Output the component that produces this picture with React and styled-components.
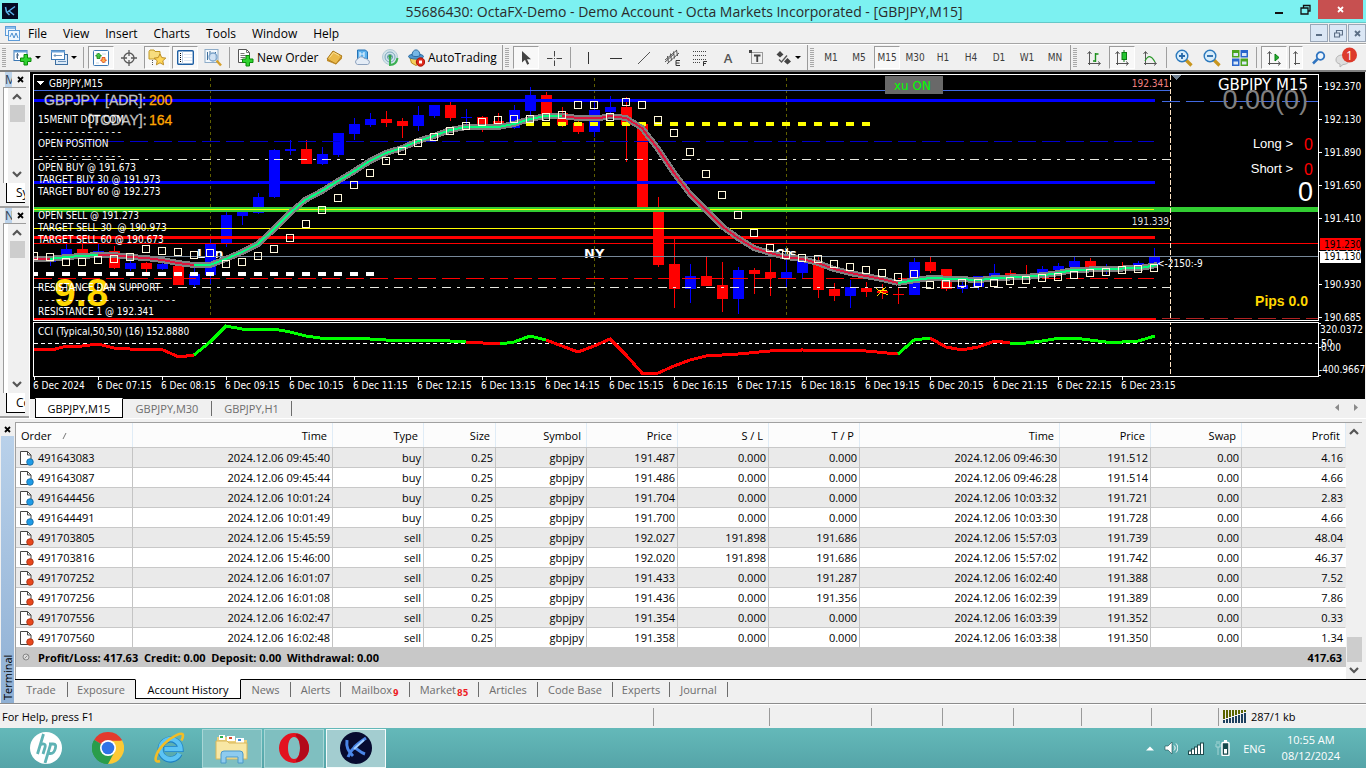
import React from "react";
import styled, { createGlobalStyle, css } from "styled-components";

const ui = `"Open Sans", "Noto Sans", sans-serif`;
const tahoma = `"DejaVu Sans Condensed", "DejaVu Sans", sans-serif`;

const GlobalStyle = createGlobalStyle`
  * { box-sizing: border-box; }
  body { margin: 0; background: #f0f0f0; font-family: ${ui}; font-size: 11px; color: #000; }
  button { font: inherit; color: inherit; background: none; border: 0; padding: 0; margin: 0; }
  svg { display: block; flex: none; }
`;

const App_ = styled.div`
  min-height: 100vh;
  display: flex;
  flex-direction: column;
  overflow: hidden;
`;

/* ---------- title and menu ---------- */
const TitleBar = styled.header`
  height: 23px;
  display: flex;
  background: #7cf1f1;
  border-bottom: 1px solid #66c8c8;
  padding-left: 2px;
`;
const TitleSide = styled.div`
  width: 106px;
  display: flex;
  align-items: ${(p) => (p.$end ? "flex-start" : "center")};
  justify-content: ${(p) => (p.$end ? "flex-end" : "flex-start")};
`;
const TitleText = styled.h1`
  flex: 1;
  margin: 0;
  font-size: 14px;
  line-height: 23px;
  font-weight: 400;
  text-align: center;
  color: #2b2b2b;
  white-space: nowrap;
`;
const CaptionButton = styled.button`
  width: ${(p) => (p.$close ? 45 : 26)}px;
  height: 19px;
  display: flex;
  align-items: center;
  justify-content: center;
  background: ${(p) => (p.$close ? "#c75050" : "transparent")};
  margin-right: ${(p) => (p.$close ? 3 : 0)}px;
`;
const MenuBar = styled.nav`
  height: 21px;
  display: flex;
  align-items: center;
  padding-left: 5px;
  border-bottom: 1px solid #a5a5a5;
`;
const MenuItem = styled.button`
  height: 20px;
  font-size: 12px;
  padding: 0 8px;
`;
const MdiButtons = styled.div`
  margin-left: auto;
  display: flex;
  gap: 1px;
`;
const MdiButton = styled.button`
  width: 18px;
  height: 18px;
  display: flex;
  align-items: center;
  justify-content: center;
  border: 1px solid #9aa6b6;
  background: #dbe7f5;
`;

/* ---------- toolbar ---------- */
const Toolbar = styled.div`
  height: 28px;
  display: flex;
  align-items: center;
  border-top: 1px solid #fff;
  border-bottom: 2px solid #808080;
`;
const Group = styled.div`
  height: 25px;
  display: flex;
  align-items: center;
  gap: 2px;
  padding: 0 ${(p) => (p.$open ? 10 : 2)}px 0 2px;
  border-right: ${(p) => (p.$open ? "0" : "1px solid #9a9a9a")};
  flex: ${(p) => (p.$open ? "1" : "none")};
`;
const Grip = styled.span`
  width: 4px;
  height: 19px;
  margin-right: 2px;
  background: repeating-linear-gradient(#a8a8a8 0 1px, #f0f0f0 1px 2px);
`;
const Sep = styled.span`
  width: 1px;
  height: 21px;
  background: #a0a0a0;
  margin: 0 2px 0 1px;
`;
const ToolButton = styled.button`
  height: 23px;
  width: ${(p) => p.$w || 26}px;
  display: flex;
  align-items: center;
  justify-content: ${(p) => (p.$label ? "flex-start" : "center")};
  gap: 3px;
  padding-left: ${(p) => (p.$label ? 3 : 0)}px;
  font-size: ${(p) => (p.$label ? 12 : 10)}px;
  white-space: nowrap;
  ${(p) =>
    p.$on &&
    css`
      border: 1px solid #9c9c9c;
      border-right-color: #fff;
      border-bottom-color: #fff;
      background: #f8f8f8;
    `}
`;
const Frame = styled(ToolButton)`
  font-family: ${tahoma};
  color: #3c3c3c;
`;
const Push = styled.span`
  margin-left: auto;
`;

/* ---------- workspace ---------- */
const Workspace = styled.main`
  display: flex;
  padding-right: 1px;
`;
const Dock = styled.aside`
  width: 30px;
  display: flex;
  flex-direction: column;
  border-right: 1px solid #fff;
`;
const DockPanel = styled.section`
  height: ${(p) => p.$h}px;
  display: flex;
  flex-direction: column;
  border-bottom: 2px solid #a0a0a0;
`;
const DockHead = styled.div`
  display: flex;
  height: 15px;
  padding: 0 5px;
  justify-content: space-between;
  align-items: center;
  color: #2d3e52;
`;
const DockLabel = styled.span`
  width: 7px;
  overflow: hidden;
  font-size: 12px;
  line-height: 15px;
  background: #bcd3ea;
`;
const DockBody = styled.div`
  flex: 1;
  margin-left: 3px;
  border-left: 1px solid #9c9c9c;
  border-top: 1px solid #9c9c9c;
  background: #fff;
  padding-left: 4px;
  margin-right: 3px;
`;
const Scroll = styled.div`
  height: 100%;
  display: flex;
  flex-direction: column;
  align-items: center;
  background: #f0f0f0;
`;
const ScrollButton = styled.button`
  width: 16px;
  height: 17px;
  display: flex;
  align-items: center;
  justify-content: center;
`;
const Thumb = styled.span`
  width: 15px;
  height: ${(p) => p.$h}px;
  background: #cdcdcd;
`;
const Space = styled.span`
  flex: 1;
`;
const DockTab = styled.button`
  height: 20px;
  margin: 0 4px 3px 6px;
  padding-left: 9px;
  overflow: hidden;
  white-space: nowrap;
  text-align: left;
  font-size: 12px;
  line-height: 18px;
  background: #fff;
  border: 1px solid #000;
  border-top: 0;
  border-right: 0;
`;
const ChartWindow = styled.section`
  flex: 1;
  min-width: 0;
`;
const Chart = styled.svg`
  width: 100%;
  height: 326px;
  background: #000;
  font-family: ${tahoma};
  font-size: 10px;
  fill: #fff;
  shape-rendering: crispEdges;
`;
const TabStrip = styled.div`
  display: flex;
  height: ${(p) => p.$h}px;
  border-top: 1px solid #000;
  padding-left: ${(p) => p.$pad || 0}px;
`;
const Tab = styled.button`
  height: ${(p) => (p.$on ? 20 : 15)}px;
  margin-top: ${(p) => (p.$on ? -1 : 2)}px;
  width: ${(p) => p.$w}px;
  display: flex;
  align-items: center;
  justify-content: center;
  white-space: nowrap;
  color: #6d6d6d;
  border-right: 1px solid ${(p) => (p.$plain ? "transparent" : "#6d6d6d")};
  ${(p) =>
    p.$on &&
    css`
      color: #000;
      background: #fff;
      border: 1px solid #000;
      border-top-color: #fff;
    `}
`;
const Unread = styled.sub`
  color: #ed1c24;
  font-family: ${tahoma};
  font-weight: 700;
  font-size: 9px;
  line-height: 9px;
  margin: 8px 0 0 1px;
`;
const TabArrows = styled.div`
  margin-left: auto;
  display: flex;
  gap: 13px;
  padding: 5px 7px 0 0;
`;

/* ---------- terminal ---------- */
const Terminal = styled.section`
  display: flex;
  border-top: 1px solid #fff;
  padding-top: 3px;
  border-bottom: 1px solid #8c8c8c;
`;
const TerminalSide = styled.div`
  width: 15px;
  display: flex;
  flex-direction: column;
  align-items: center;
`;
const TerminalClose = styled.button`
  height: 14px;
  display: flex;
  align-items: center;
`;
const TerminalName = styled.h2`
  flex: 1;
  margin: 0;
  width: 13px;
  font-size: 11px;
  line-height: 13px;
  font-weight: 400;
  writing-mode: vertical-rl;
  transform: rotate(180deg);
  background: linear-gradient(#8fb0d4, #b9d1ea);
  padding-top: 3px;
`;
const TerminalMain = styled.div`
  flex: 1;
  min-width: 0;
`;
const TableArea = styled.div`
  display: flex;
  align-items: stretch;
  height: 257px;
  background: #fff;
  border-left: 1px solid #a0a0a0;
  border-top: 1px solid #a0a0a0;
  margin-right: 4px;
`;
const TableBox = styled.div`
  flex: 1;
  min-width: 0;
`;
const Table = styled.table`
  width: 100%;
  border-collapse: separate;
  border-spacing: 0;
  table-layout: fixed;
`;
const Th = styled.th`
  height: 24px;
  padding: 0 5px;
  font-weight: 400;
  text-align: ${(p) => (p.$left ? "left" : "right")};
  border-right: 1px solid #e0ecf6;
  background: #fcfcfc;
`;
const Td = styled.td`
  height: 20px;
  padding: 0 2px 0 3px;
  line-height: 17px;
  text-align: right;
  white-space: nowrap;
  border-top: 1px solid #c8c8c8;
  border-right: 1px solid ${(p) => (p.$last ? "transparent" : "#c4c4c4")};
`;
const Tr = styled.tr`
  background: ${(p) => (p.$odd ? "#eaeaea" : "#fff")};
`;
const OrderCell = styled.div`
  display: flex;
  align-items: center;
  gap: 4px;
`;
const TotalTd = styled.td`
  height: 20px;
  padding: 0 4px 0 6px;
  background: #c8c8c8;
  font-weight: 700;
  text-align: ${(p) => (p.$right ? "right" : "left")};
`;
const TotalText = styled.div`
  display: flex;
  align-items: center;
  gap: 8px;
`;
const TableScroll = styled.div`
  width: 16px;
  flex: none;
`;

/* ---------- status bar and taskbar ---------- */
const StatusBar = styled.footer`
  height: 24px;
  display: flex;
  align-items: center;
  border-top: 1px solid #fff;
`;
const StatusCell = styled.div`
  width: ${(p) => p.$w}px;
  flex: ${(p) => (p.$w ? "none" : "1")};
  height: 18px;
  display: flex;
  align-items: center;
  gap: 4px;
  padding-left: ${(p) => (p.$w ? 4 : 2)}px;
  border-left: ${(p) => (p.$w ? "1px solid #9a9a9a" : "0")};
`;
const Taskbar = styled.nav`
  flex: 1;
  min-height: 40px;
  display: flex;
  align-items: center;
  gap: 2px;
  padding-left: 16px;
  background: linear-gradient(#64b9b9, #55a4a8);
  color: #fff;
`;
const TaskButton = styled.button`
  width: 60px;
  height: 39px;
  display: flex;
  align-items: center;
  justify-content: center;
  ${(p) =>
    p.$state &&
    css`
      background: ${p.$state === "active" ? "#a3cdd0" : "#7fbfc0"};
      border: 1px solid ${p.$state === "active" ? "#f4fbfb" : "#a8d6d6"};
    `}
`;
const Tray = styled.div`
  margin-left: auto;
  display: flex;
  align-items: center;
  gap: 10px;
  padding-right: 26px;
`;
const Clock = styled.time`
  font-size: 11px;
  line-height: 16px;
  text-align: center;
  margin-left: 6px;
`;

/* ---------- icons ---------- */
const Svg = ({ w = 18, h = w, children, ...rest }) => (
  <svg width={w} height={h} viewBox={`0 0 ${w} ${h}`} fill="none" aria-hidden="true" {...rest}>
    {children}
  </svg>
);
const Caret = () => (
  <Svg w={6} h={4}><path d="M0 0h6L3 3z" fill="#000" /></Svg>
);
const Cross = ({ c = "#000" }) => (
  <Svg w={7} h={7}><path d="M1 1l5 5M6 1L1 6" stroke={c} strokeWidth="1.8" /></Svg>
);
const Chevron = ({ up }) => (
  <Svg w={10} h={7}>
    <path d={up ? "M1 6l4-4 4 4" : "M1 1l4 4 4-4"} stroke="#555" strokeWidth="2.2" />
  </Svg>
);
const Plus = ({ x, y }) => (
  <path transform={`translate(${x} ${y})`} d="M4 .5h3.500v3.500H11v3.500H7.500V11H4V7.500H.5V4H4z" fill="#2fd32f" stroke="#0a8a0a" />
);
const icons = {
  newChart: (
    <Svg w={19} h={18}>
      <rect x="1" y="1.500" width="13" height="10" fill="#fff" stroke="#3c78b4" />
      <path d="M1 2.500h13" stroke="#6aa2d8" strokeWidth="2" />
      <path d="M4.500 4v6M3 6h3M3 8h2" stroke="#4a6a8a" />
      <Plus x={7} y={5} />
    </Svg>
  ),
  profiles: (
    <Svg w={18} h={17}>
      <rect x="5.500" y="5.500" width="12" height="10" fill="#dbe9f7" stroke="#3c6ea0" />
      <path d="M8 12.500h8" stroke="#6d94ba" />
      <rect x="1.500" y="1.500" width="13" height="9" fill="#fff" stroke="#3c78b4" />
      <path d="M1 2.500h14" stroke="#6aa2d8" strokeWidth="2" />
      <path d="M4 6.500h8M5.500 5L4 6.500 5.500 8" stroke="#6d94ba" />
    </Svg>
  ),
  market: (
    <Svg w={16}>
      <rect x=".5" y=".5" width="15" height="15" rx="1" fill="#fff" stroke="#3c78b4" />
      <path d="M3 3.500h4M9 12.500h4M9 4h4M3 13h3" stroke="#c9d8e6" />
      <path d="M5.500 3l3 3h-1.500v2.500h-3V6H2.500z" fill="#43c443" stroke="#15820f" strokeWidth=".8" />
      <path d="M10.500 13l3-3H12V7.500H9V10H7.500z" fill="#ffb04a" stroke="#e03a10" strokeWidth=".8" />
    </Svg>
  ),
  data: (
    <Svg w={16}>
      <circle cx="8" cy="8" r="5" stroke="#5a5a5a" strokeWidth="1.300" />
      <path d="M8 0v6M8 10v6M0 8h6M10 8h6" stroke="#5a5a5a" strokeWidth="1.300" />
    </Svg>
  ),
  navigator: (
    <Svg w={18} h={17}>
      <path d="M1 2.500l1-1.500h4l1 1.500h5V10H1z" fill="#f7dd7e" stroke="#c29a26" />
      <path d="M4.500 11v5" stroke="#555" strokeDasharray="1 1" />
      <path d="M12 5l1.800 3.600 4 .5-3 2.700.8 4-3.600-2-3.600 2 .8-4-3-2.700 4-.5z" fill="#ffd75a" stroke="#b5851b" strokeWidth=".9" />
    </Svg>
  ),
  terminal: (
    <Svg w={17} h={15}>
      <rect x=".7" y=".7" width="15.600" height="13.600" rx="1" fill="#fff" stroke="#1d5fa4" strokeWidth="1.400" />
      <path d="M5.500 1v13" stroke="#b7cce2" />
      <path d="M3 3.500h1M3 5.500h1M3 7.500h1M3 9.500h1M3 11.500h1" stroke="#000" />
      <path d="M7 4.500h8M7 7.500h8M7 10.500h8" stroke="#dfe9f4" />
    </Svg>
  ),
  tester: (
    <Svg w={18}>
      <rect x="1" y=".5" width="13" height="13" fill="#f3f8fc" stroke="#8eacc8" />
      <path d="M3.500 3v8M6 2v6M11.500 3v8" stroke="#3c6e9c" />
      <circle cx="9" cy="8" r="4" fill="#c9def2" fillOpacity=".85" stroke="#7ba3c9" strokeWidth="1.300" />
      <path d="M12.500 11.500l4.500 5" stroke="#d6a02c" strokeWidth="2.500" />
    </Svg>
  ),
  order: (
    <Svg w={17} h={18}>
      <path d="M1.500.5h8l3 3v10h-11z" fill="#fff" stroke="#555" />
      <path d="M9.500.5v3h3M3.500 4.500h4M3.500 6.500h7M3.500 8.500h5M3.500 10.500h3" stroke="#777" />
      <Plus x={5} y={6} />
    </Svg>
  ),
  gold: (
    <Svg w={17} h={15}>
      <path d="M1 9L7 1l9 5-6 8z" fill="#eab94a" stroke="#a87617" />
      <path d="M1 9l9 5 6-8v2.500l-6 6L1 11z" fill="#c08a24" />
      <path d="M3.500 7.500l4-5 5.500 3" stroke="#fbe39a" />
    </Svg>
  ),
  cloud: (
    <Svg w={17}>
      <path d="M3.500 1h8l2 2v7h-10z" fill="#5db1ec" stroke="#2673b5" />
      <path d="M6 3v5M6 5h4M10 3v5" stroke="#e3f3ff" strokeWidth="1.200" />
      <path d="M3.500 15.500a2.700 2.700 0 010-5.200 4 4 0 017-.8 3 3 0 013 1.300 2.400 2.400 0 010 4.700z" fill="#e4ecf6" stroke="#8ca1bd" />
    </Svg>
  ),
  signal: (
    <Svg w={18} h={17}>
      <circle cx="9" cy="8" r="7.500" fill="#d3e4ea" stroke="#b3cad6" />
      <circle cx="9" cy="8" r="5" stroke="#7da7bd" />
      <circle cx="9" cy="8" r="2.500" stroke="#5a92b0" />
      <path d="M9 7v9c5 0 7-4 7.500-7" stroke="#3bb052" strokeWidth="2" />
      <circle cx="9" cy="7.500" r="1.700" fill="#34a04a" />
    </Svg>
  ),
  auto: (
    <Svg w={17} h={18}>
      <path d="M2 9h12l-1.500 5L8 16.500 3.500 14z" fill="#f4cf5b" stroke="#bd8d20" />
      <ellipse cx="8" cy="7.500" rx="7.500" ry="2.600" fill="#4e97cf" stroke="#2c6da3" />
      <path d="M4 6.500c0-7.500 8-7.500 8 0-2 1.500-6 1.500-8 0z" fill="#76b7e6" stroke="#2c6da3" />
      <circle cx="12.500" cy="13" r="4.200" fill="#df2a1b" stroke="#a81006" />
      <rect x="11" y="11.500" width="3" height="3" fill="#fff" />
    </Svg>
  ),
  cursor: (
    <Svg w={10} h={16}><path d="M1 1v11.500l3-2.700 2.200 5 2-1-2.200-4.600h4z" fill="#444" /></Svg>
  ),
  cross: (
    <Svg w={16}><path d="M8.500 1v5.500M8.500 10.500V16M1 8.500h5.500M10.500 8.500H16M8 8.500h1" stroke="#444" /></Svg>
  ),
  vline: <Svg w={14}><path d="M7.500 1v12" stroke="#333" strokeWidth="1" /></Svg>,
  hline: <Svg w={14}><path d="M1 7.500h12" stroke="#333" /></Svg>,
  trend: <Svg w={14}><path d="M1 13L13 1" stroke="#555" /></Svg>,
  channel: (
    <Svg w={17}>
      <path d="M1 11L13 1M3 15L15 4M3.500 7l1 7M6.500 4.500l1 7M9.500 2.500l1 7M12.500 1l1 6M1 13l9-8" stroke="#555" />
      <path d="M16 11.500h-4v5h4M12 14h3.500" stroke="#333" />
    </Svg>
  ),
  fibo: (
    <Svg w={16}>
      <path d="M1 1.500h13M1 5.500h13M1 9.500h13M1 12.500h8" stroke="#444" strokeDasharray="1 1" />
      <path d="M15 11.500h-3.500V16M11.500 13.500H14" stroke="#333" />
    </Svg>
  ),
  label: (
    <Svg w={15}>
      <rect x="2.500" y="2.500" width="11" height="11" stroke="#444" strokeDasharray="1 1" />
      <path d="M0 0h3v3H0z" fill="#444" />
      <path d="M5 5.500h6.500M8.250 5v7" stroke="#444" strokeWidth="1.800" />
    </Svg>
  ),
  shapes: (
    <Svg w={16} h={14}>
      <path d="M4 0l3.500 3.500L4 6.500 .5 3.500zM11.500 7l3.500 3.500-3.500 3-3.500-3z" fill="#444" />
      <path d="M3 8.500l2.500 2.500L11 4.500" stroke="#555" strokeWidth="1.300" />
    </Svg>
  ),
};
const Axes = () => (
  <path d="M3.500 15V2M1.500 4l2-2.500 2 2.500M2 13.500h12M12 11.500l2.500 2-2.500 2" stroke="#555" />
);
icons.bars = <Svg w={16}><Axes /><path d="M9.500 3v9M9.500 4h3M7 11h2.500" stroke="#1b8f1b" strokeWidth="1.400" /></Svg>;
icons.candles = <Svg w={16}><Axes /><path d="M10 0v12" stroke="#0b7a12" /><rect x="8" y="2.500" width="4.500" height="7" fill="#23c630" stroke="#0b7a12" /></Svg>;
icons.line = <Svg w={16}><Axes /><path d="M3 11c3-6 6-6 10 1" stroke="#2a9a2a" strokeWidth="1.200" /></Svg>;
icons.scroll = <Svg w={16}><Axes /><path d="M9 4l4 3.500-4 3.500z" fill="#23b030" stroke="#0b7a12" /></Svg>;
icons.shift = <Svg w={8} h={16}><Axes /></Svg>;
const zoom = (plus) => (
  <Svg w={18}>
    <path d="M11 11l5.500 5.500" stroke="#c8961f" strokeWidth="3.200" />
    <circle cx="7" cy="7" r="5.800" fill="#d8edfb" stroke="#2b79bd" strokeWidth="1.400" />
    <path d={plus ? "M4 7h6M7 4v6" : "M4 7h6"} stroke="#2769a8" strokeWidth="1.800" />
  </Svg>
);
icons.zoomIn = zoom(true);
icons.zoomOut = zoom(false);
icons.tile = (
  <Svg w={16}>
    <path d="M0 0h7.500v7.500H0zM8.500 8.500H16V16H8.500z" fill="#4aa51e" />
    <path d="M8.500 0H16v7.500H8.500zM0 8.500h7.500V16H0z" fill="#2a66cc" />
    <path d="M1.500 3h4.500v3H1.500zM10 3h4.500v3H10zM1.500 11.500h4.500v3H1.500zM10 11.500h4.500v3H10z" fill="#dbe9f7" />
  </Svg>
);
icons.search = (
  <Svg w={14}><circle cx="8.500" cy="5" r="3.800" fill="#eef6fd" stroke="#2f74c0" strokeWidth="1.800" /><path d="M5.500 8L1 12.500" stroke="#2f74c0" strokeWidth="2.500" /></Svg>
);
icons.chat = (
  <Svg w={24} h={22}>
    <path d="M2 13c0-3.500 3-5 6-5s7 2 7 5-3 4.500-6 4.500L6 20v-3c-3-.8-4-2-4-4z" fill="#dedede" stroke="#b5b5b5" />
    <circle cx="15.500" cy="8" r="7.500" fill="#dd3a2b" />
    <text x="15.500" y="12.500" textAnchor="middle" fontSize="12" fill="#fff">1</text>
  </Svg>
);
const OctaLogo = () => (
  <Svg w={16}>
    <rect width="16" height="16" fill="#050a24" />
    <path d="M3.500 4l1 5M4.500 9l3 3M13 3.500L5.500 9M6.500 7.500l5.500 4.500" stroke="#5ab0ea" strokeWidth="1.500" />
  </Svg>
);
const AppMenuIcon = () => (
  <Svg w={15}>
    <rect x=".5" y=".5" width="10" height="9" fill="#eef6fe" stroke="#5c9bd8" />
    <path d="M1 2h9" stroke="#8bbcea" strokeWidth="2" />
    <rect x="3.500" y="4.500" width="11" height="10" fill="#eef6fe" stroke="#5c9bd8" />
    <path d="M5 11l2-4 2 5 2-5 2 5" stroke="#4a8ed0" />
  </Svg>
);
const DocIcon = ({ sell }) => (
  <Svg w={15} h={16}>
    <path d="M1.500 1.500h7l3.500 3.500v9.500H1.500z" fill="#fff" stroke="#444" />
    <path d="M8.500 1.500v3.500h3.500" stroke="#444" />
    <circle cx="11" cy="12" r="3.300" fill={sell ? "#e8471d" : "#1e9be6"} stroke={sell ? "#a32c0c" : "#0e68a4"} strokeWidth=".8" />
  </Svg>
);

/* ---------- chart data ---------- */
/* colour, body top, body bottom, wick top, wick bottom; one bar every 16px */
const bars = [
  "r 258 260 256 262", "b 257 262 256 266", "b 249 256 243 256", "r 249 254 243 256", "b 251 256 243 256",
  "r 251 268 246 269", "b 263 269 260 271", "r 263 269 262 272", "b 264 269 262 270", "r 266 285 264 285",
  "b 274 285 267 287", "b 243 275 237 284", "b 215 244 212 247", "b 212 216 211 225", "b 197 213 193 214",
  "b 150 197 149 198", "b 149 151 140 155", "r 149 164 140 164", "b 154 164 147 165", "b 133 155 133 157",
  "b 124 134 118 140", "b 119 125 113 127", "r 119 123 111 127", "r 121 126 118 138", "b 115 126 106 131",
  "b 105 116 105 118", "r 105 118 102 121", "b 117 118 109 125", "r 117 125 116 132", "r 121 124 113 124",
  "b 110 128 105 129", "b 95 111 87 115", "r 95 114 92 114", "r 113 125 107 127", "r 123 132 120 134",
  "b 110 132 102 137", "b 107 112 96 113", "r 107 125 97 162", "r 124 209 122 209", "r 208 265 197 267",
  "r 264 289 239 308", "b 276 289 264 303", "r 276 286 257 286", "r 285 299 262 312", "b 270 299 267 314",
  "r 270 274 268 294", "r 272 278 259 296", "b 272 278 260 288", "b 261 273 257 278", "r 265 290 257 298",
  "r 289 296 283 301", "b 287 296 280 308", "r 288 292 282 297", "r 291 293 284 299", "r 294 295 288 304",
  "b 262 295 258 295", "r 262 271 257 273", "r 269 289 269 291", "b 285 289 279 293", "b 276 287 276 290",
  "b 273 278 264 278", "r 273 275 270 278", "r 276 277 265 277", "b 269 274 266 274", "b 266 270 263 272",
  "b 261 267 256 267", "r 261 268 258 268", "b 270 271 264 274", "r 269 270 262 270", "b 263 268 261 268",
  "b 256 265 248 265",
].map((s) => s.split(" "));
const squares = [
  256, 257, 262, 262, 260, 259, 257, 249, 251, 252, 255, 253, 264, 262, 256, 249, 238, 224, 210, 198, 185, 173,
  161, 151, 143, 137, 131, 126, 122, 120, 119, 119, 117, 115, 105, 105, 117, 102, 105, 120, 133, 152, 174, 195,
  215, 233, 248, 255, 258, 259, 264, 267, 270, 273, 277, 274, 285, 284, 283, 283, 283, 281, 280, 278, 277, 275,
  273, 272, 270, 269, 268,
];
const average = [
  ["#dc143c", "34,259 50,259"],
  ["#00ff7f", "50,259 66,257 82,256 98,255"],
  ["#dc143c", "98,255 114,255 130,257 146,258 162,260 178,263 194,265"],
  ["#00ff7f", "194,265 210,265 226,259 242,252 258,244 273,230 290,213 305,200 322,191 338,181 353,172 370,161 386,153 402,148 418,141 434,136 450,130 466,127 498,127 514,124 530,119 546,116 562,116"],
  ["#dc143c", "562,116 578,118 600,118 610,116 626,118 642,128 658,149 674,173 690,194 706,210 723,227 738,238 754,248 770,253 786,257 802,259 818,263 834,269 850,273 866,276 882,279 898,283"],
  ["#00ff7f", "898,283 916,280 930,278 980,280 995,278 1026,277 1053,274 1073,270 1106,269 1140,268 1157,265"],
];
const cci = [
  ["#f00", "34,349 52,350 63,347 82,346 98,344 114,348 130,349 163,350 179,357 194,355"],
  ["#0f0", "194,355 210,342 226,326 242,329 258,330 274,329 290,332 306,336 320,338 354,338 386,340 402,341 434,340 466,342"],
  ["#f00", "466,342 500,344"],
  ["#0f0", "500,344 514,342 530,336 546,340"],
  ["#f00", "546,340 562,346 578,352 594,346 610,339 626,355 642,373 658,373 674,366 690,360 706,356 738,354 770,351 802,350 866,351 898,354"],
  ["#0f0", "898,354 914,340 930,338"],
  ["#f00", "930,338 946,347 962,350 978,347 995,341 1010,343"],
  ["#0f0", "1010,343 1026,343 1042,341 1060,338 1074,338 1090,340 1106,342 1122,342 1138,341 1155,336"],
];
const notes = [
  [123, "15MENIT DOT COM"], [135, "--------------"], [147, "OPEN POSITION"], [159, "--------------"],
  [171, "OPEN BUY @ 191.673"], [183, "TARGET BUY 30 @ 191.973"], [195, "TARGET BUY 60 @ 192.273"],
  [219, "OPEN SELL @ 191.273"], [231, "TARGET SELL 30  @ 190.973"], [243, "TARGET SELL 60 @ 190.673"],
  [291, "RESISTANCE DAN SUPPORT"], [303, "-----------------------"],
  [315, "RESISTANCE 1 @ 192.341"],
];
const times = ["6 Dec 2024", ...Array.from({ length: 17 }, (_, i) => `6 Dec ${String(i + 7).padStart(2, "0")}:15`)];
const prices = [[90, "192.370"], [123, "192.130"], [156, "191.890"], [189, "191.650"], [222, "191.410"], [255, "191.170"], [288, "190.930"], [321, "190.685"]];
const FAR = 4000;

const H = ({ y, x1 = 34, x2 = FAR, c, w = 1, dash }) => (
  <path d={`M${x1} ${y}H${x2}`} stroke={c} strokeWidth={w} strokeDasharray={dash} fill="none" />
);

const PriceChart = () => (
  <Chart role="img" aria-label="GBPJPY M15 price chart">
    <g transform="translate(-30 -72)">
      <g fontSize="13" fontWeight="700" fontFamily="DejaVu Sans">
        <text x="584" y="258">NY</text>
        <text x="197" y="258">Lon</text>
        <text x="775" y="258">Cls</text>
      </g>
      {[210.5, 594.5, 786.5].map((x) => (
        <path key={x} d={`M${x} 78V316`} stroke="#5f5f00" strokeDasharray="3 3" />
      ))}
      {bars.map(([c, t, b, wt, wb], i) => (
        <g key={i} fill={c === "r" ? "#f00" : "#00f"}>
          <rect x={i ? 29 + i * 16 : 34} y={t} width={i ? 11 : 6} height={b - t} />
          <rect x={34 + i * 16} y={wt} width="1" height={wb - wt} />
        </g>
      ))}
      <H y={90.5} x2={1170} c="#4169e1" />
      <H y={100.5} x2={1155} c="#00f" w={3} />
      <H y={101.5} x1={1162} c="#4169e1" dash="18 6" />
      <H y={141.5} x2={1154} c="#0000cd" dash="18 6" x1={58} />
      <H y={159.5} x2={1170} c="#e8e8e0" dash="9 6 3 6" x1={34} />
      <H y={182.5} x2={1155} c="#00f" w={3} />
      <H y={209.5} c="#32cd32" w={5} />
      <H y={209.5} x2={1154} c="#ff0" />
      <H y={228.5} x2={1170} c="#ff0" />
      <H y={237.5} x2={1155} c="#f00" w={3} />
      <H y={243.5} c="#f00" />
      <H y={256.5} c="#778899" />
      <H y={278.5} x2={1154} c="#f00" dash="18 6" />
      <H y={287.5} x2={1170} c="#e8e8e0" dash="9 6 3 6" />
      <H y={318.5} x1={1162} c="#b22222" dash="18 6" />
      <H y={319} x2={1156} c="#f00" w={2} />
      <H y={274} x1={34} x2={38} c="#fff" w={4} />
      <H y={274} x1={46} x2={375} c="#fff" w={4} dash="8 8" />
      <H y={124} x1={526} x2={871} c="#ff0" w={4} dash="8 8" />
      <g fill="none" strokeLinejoin="round">
        {average.map(([c, p], i) => <polyline key={i} points={p} stroke="#808080" strokeWidth="6" />)}
        {average.map(([c, p], i) => <polyline key={i} points={p} stroke={c} strokeWidth="2" />)}
      </g>
      <g fill="none" stroke="#fff8dc">
        {squares.map((y, i) => <rect key={i} x={30.5 + i * 16} y={y - 3.5} width="7" height="7" />)}
      </g>
      <path d="M876 288l3 3 8-1M877 296l4-4 7 3M880 292l6-5" stroke="#ffd700" fill="none" />
      <text x="1157" y="267">&lt;-2150:-9</text>
      <g textAnchor="end">
        <text x="1169" y="87" fill="#f08080">192.341</text>
        <text x="1169" y="225" fill="#ddd">191.339</text>
      </g>
      <path d="M1170.500 75V376" stroke="#ffe4c4" strokeDasharray="5 2" />
      <path d="M1171 75h10l-5 5z" fill="#708090" />

      <path d="M37 81h7l-3.500 4z" />
      <text x="49" y="87">GBPJPY,M15</text>
      <g fontFamily="Liberation Sans" fontSize="14" fill="#c0c0c0" stroke="#c0c0c0" strokeWidth=".3">
        <text x="44" y="105">GBPJPY</text>
        <text x="105" y="105">[ADR]:</text>
        <text x="88" y="125">[TODAY]:</text>
        <text x="149" y="105" fill="#ffa500" stroke="#ffa500">200</text>
        <text x="149" y="125" fill="#ffa500" stroke="#ffa500">164</text>
      </g>
      <text x="54" y="306" fontFamily="Liberation Sans" fontWeight="700" fontSize="39" fill="#ffd700">9.8</text>
      {notes.map(([y, t]) => (
        <text key={y} x="38" y={y} xmlSpace="preserve" fontFamily={t[0] === "-" ? "DejaVu Sans Mono" : undefined}>{t}</text>
      ))}
      <rect x="885" y="76" width="58" height="18" fill="#696969" />
      <text x="894" y="90" fontFamily="DejaVu Sans" fontSize="12" fill="#0f0">xu ON</text>

      <rect x="31" y="321" width="4000" height="1" fill="#000" />
      <H y={74.5} x1={33} c="#fff" />
      <H y={320.5} x1={33} c="#fff" />
      <H y={322.5} x1={33} c="#fff" />
      <H y={376.5} x1={33} c="#fff" />
      <rect x="30" y="75" width="3" height="301" fill="#000" />
      <path d="M33.500 74V321M33.500 322V377" stroke="#fff" />
      <H y={343.5} c="#fff" dash="4 3" />
      {cci.map(([c, p], i) => <polyline key={i} points={p} stroke={c} strokeWidth="3" fill="none" />)}
      <text x="38" y="335">CCI (Typical,50,50) (16) 152.8880</text>
      {times.map((t, i) => (
        <g key={t}>
          <path d={`M${34.5 + i * 64} 377v3`} stroke="#fff" />
          <text x={33 + i * 64} y="389">{t}</text>
        </g>
      ))}
    </g>
    <svg x="100%" y="0" overflow="visible">
      <g transform="translate(-1365 -72)">
        <rect x="1318" y="72" width="60" height="308" fill="#000" />
        <path d="M1318.500 74V321M1318.500 322V377" stroke="#fff" />
        <g textAnchor="end" fontFamily="Liberation Sans">
          <text x="1308" y="90" fontSize="15" fontFamily="DejaVu Sans">GBPJPY M15</text>
          <text x="1308" y="109" fontSize="27" fill="#808080">0.00(0)</text>
          <text x="1293" y="148" fontSize="13">Long &gt;</text>
          <text x="1293" y="173" fontSize="13">Short &gt;</text>
          <text x="1313" y="150" fontSize="16" fill="#f00">0</text>
          <text x="1313" y="175" fontSize="16" fill="#f00">0</text>
          <text x="1313" y="201" fontSize="27">0</text>
          <text x="1308" y="306" fontSize="14" fontWeight="700" fill="#ffd700">Pips 0.0</text>
        </g>
        {prices.map(([y, t]) => (
          <g key={t}>
            <path d={`M1319 ${y - 3.5}h3`} stroke="#fff" />
            <text x="1324" y={y}>{t}</text>
          </g>
        ))}
        <rect x="1320" y="238" width="41" height="12" fill="#f00" />
        <text x="1324" y="248" fill="#000">191.230</text>
        <rect x="1320" y="251" width="41" height="12" fill="#fff" />
        <text x="1324" y="260" fill="#000">191.130</text>
        <text x="1320" y="333">320.0372</text>
        <text x="1321" y="347">50</text>
        <text x="1321" y="351">0.00</text>
        <text x="1319" y="373">-400.9667</text>
        <path d="M1319 323.500h2M1319 347.500h2M1319 375.500h2" stroke="#fff" />
      </g>
    </svg>
  </Chart>
);

/* ---------- terminal data ---------- */
const columns = [
  ["Order", 117], ["Time", 200], ["Type", 91], ["Size", 72], ["Symbol", 91], ["Price", 91], ["S / L", 91],
  ["T / P", 91], ["Time", 200], ["Price", 91], ["Swap", 91], ["Profit", 0],
];
const D = "2024.12.06 ";
const orders = [
  ["491643083", "09:45:40", "buy", "191.487", "0.000", "0.000", "09:46:30", "191.512", "4.16"],
  ["491643087", "09:45:44", "buy", "191.486", "0.000", "0.000", "09:46:28", "191.514", "4.66"],
  ["491644456", "10:01:24", "buy", "191.704", "0.000", "0.000", "10:03:32", "191.721", "2.83"],
  ["491644491", "10:01:49", "buy", "191.700", "0.000", "0.000", "10:03:30", "191.728", "4.66"],
  ["491703805", "15:45:59", "sell", "192.027", "191.898", "191.686", "15:57:03", "191.739", "48.04"],
  ["491703816", "15:46:00", "sell", "192.020", "191.898", "191.686", "15:57:02", "191.742", "46.37"],
  ["491707252", "16:01:07", "sell", "191.433", "0.000", "191.287", "16:02:40", "191.388", "7.52"],
  ["491707256", "16:01:08", "sell", "191.436", "0.000", "191.356", "16:02:39", "191.389", "7.86"],
  ["491707556", "16:02:47", "sell", "191.354", "0.000", "0.000", "16:03:39", "191.352", "0.33"],
  ["491707560", "16:02:48", "sell", "191.358", "0.000", "0.000", "16:03:38", "191.350", "1.34"],
];
const terminalTabs = [
  ["Trade", 53], ["Exposure", 67, { plain: true }], ["Account History", 106, { on: true }], ["News", 50], ["Alerts", 50],
  ["Mailbox", 69, { n: 9 }], ["Market", 69, { n: 85 }], ["Articles", 59], ["Code Base", 75], ["Experts", 57], ["Journal", 58],
];

const Tool = ({ name, label, on, w }) => (
  <ToolButton aria-label={label} $on={on} $w={w}>{icons[name]}</ToolButton>
);

const DockSection = ({ h, label, tab, thumb }) => (
  <DockPanel $h={h}>
    <DockHead><DockLabel>{label}</DockLabel><button aria-label="Close panel"><Cross /></button></DockHead>
    <DockBody>
      <Scroll>
        <ScrollButton aria-label="Scroll up"><Chevron up /></ScrollButton>
        <Thumb $h={thumb} />
        <Space />
        <ScrollButton aria-label="Scroll down"><Chevron /></ScrollButton>
      </Scroll>
    </DockBody>
    <DockTab>{tab}</DockTab>
  </DockPanel>
);

export default function App() {
  return (
    <App_>
      <GlobalStyle />
      <TitleBar>
        <TitleSide><OctaLogo /></TitleSide>
        <TitleText>55686430: OctaFX-Demo - Demo Account - Octa Markets Incorporated - [GBPJPY,M15]</TitleText>
        <TitleSide $end>
          <CaptionButton aria-label="Minimize"><Svg w={10}><path d="M1 8h8" stroke="#111" strokeWidth="2" /></Svg></CaptionButton>
          <CaptionButton aria-label="Restore"><Svg w={11}><path d="M1 4h7v6H1zM3.500 4V1.500H10V7H8" stroke="#111" strokeWidth="1.300" /></Svg></CaptionButton>
          <CaptionButton $close aria-label="Close"><Cross c="#fff" /></CaptionButton>
        </TitleSide>
      </TitleBar>
      <MenuBar>
        <AppMenuIcon />
        {["File", "View", "Insert", "Charts", "Tools", "Window", "Help"].map((m) => <MenuItem key={m}>{m}</MenuItem>)}
        <MdiButtons>
          <MdiButton aria-label="Minimize chart"><Svg w={8}><path d="M1 6h6" stroke="#5c6f86" strokeWidth="2" /></Svg></MdiButton>
          <MdiButton aria-label="Restore chart"><Svg w={9}><path d="M.5 4h5v4h-5zM2.500 4V1.500h6V6H6" stroke="#5c6f86" strokeWidth="1.200" /></Svg></MdiButton>
          <MdiButton aria-label="Close chart"><Cross c="#5c6f86" /></MdiButton>
        </MdiButtons>
      </MenuBar>

      <Toolbar>
        <Group>
          <Grip />
          <ToolButton aria-label="New chart" $w={34}>{icons.newChart}<Caret /></ToolButton>
          <ToolButton aria-label="Profiles" $w={34}>{icons.profiles}<Caret /></ToolButton>
          <Sep />
          <Tool name="market" label="Market Watch" on />
          <Tool name="data" label="Data Window" />
          <Tool name="navigator" label="Navigator" on />
          <Tool name="terminal" label="Terminal" on />
          <Tool name="tester" label="Strategy Tester" />
          <Sep />
          <ToolButton $label $w={85}>{icons.order}New Order</ToolButton>
          <Tool name="gold" label="MetaEditor" />
          <Tool name="cloud" label="Virtual hosting" />
          <Tool name="signal" label="Signals" />
          <ToolButton $label $w={95}>{icons.auto}AutoTrading</ToolButton>
        </Group>
        <Group>
          <Grip />
          <Tool name="cursor" label="Cursor" on />
          <Tool name="cross" label="Crosshair" />
          <Sep />
          <Tool name="vline" label="Vertical line" />
          <Tool name="hline" label="Horizontal line" />
          <Tool name="trend" label="Trendline" />
          <Tool name="channel" label="Equidistant channel" />
          <Tool name="fibo" label="Fibonacci retracement" />
          <Letter>A</Letter>
          <Tool name="label" label="Text label" />
          <ToolButton aria-label="Arrows" $w={34}>{icons.shapes}<Caret /></ToolButton>
        </Group>
        <Group>
          <Grip />
          {["M1", "M5", "M15", "M30", "H1", "H4", "D1", "W1", "MN"].map((f) => (
            <Frame key={f} $on={f === "M15"}>{f}</Frame>
          ))}
        </Group>
        <Group $open>
          <Grip />
          <Tool name="bars" label="Bar chart" />
          <Tool name="candles" label="Candlesticks" on />
          <Tool name="line" label="Line chart" />
          <Sep />
          <Tool name="zoomIn" label="Zoom in" />
          <Tool name="zoomOut" label="Zoom out" />
          <Tool name="tile" label="Tile windows" />
          <Sep />
          <Tool name="scroll" label="Auto scroll" on />
          <Tool name="shift" label="Chart shift" on w={14} />
          <Push />
          <Tool name="search" label="Search" w={24} />
          <Tool name="chat" label="Messages, 1 new" />
        </Group>
      </Toolbar>

      <Workspace>
        <Dock>
          <DockSection h={136} label="M" tab="Symbols" thumb={17} />
          <DockSection h={210} label="N" tab="Common" thumb={17} />
        </Dock>
        <ChartWindow>
          <PriceChart />
          <TabStrip $h={20} $pad={5}>
            <Tab $on $w={88}>GBPJPY,M15</Tab>
            <Tab $w={89}>GBPJPY,M30</Tab>
            <Tab $w={80}>GBPJPY,H1</Tab>
            <TabArrows>
              <Svg w={5} h={8}><path d="M4 0v7L0 3.500z" fill="#8a8a8a" /></Svg>
              <Svg w={5} h={8}><path d="M1 0v7l4-3.500z" fill="#8a8a8a" /></Svg>
            </TabArrows>
          </TabStrip>
        </ChartWindow>
      </Workspace>

      <Terminal>
        <TerminalSide>
          <TerminalClose aria-label="Close terminal"><Cross /></TerminalClose>
          <TerminalName>Terminal</TerminalName>
        </TerminalSide>
        <TerminalMain>
          <TableArea>
            <TableBox>
              <Table>
                <colgroup>{columns.map(([, w], i) => <Col key={i} $w={w} />)}</colgroup>
                <thead>
                  <tr>
                    {columns.map(([c], i) => (
                      <Th key={i} $left={i === 0}>
                        {i === 0 ? <SortHead>{c}<Svg w={6} h={7}><path d="M1 7l3-6" stroke="#777" /></Svg></SortHead> : c}
                      </Th>
                    ))}
                  </tr>
                </thead>
                <tbody>
                  {orders.map(([id, t1, type, p1, sl, tp, t2, p2, profit], i) => (
                    <Tr key={id} $odd={i % 2 === 0}>
                      <Td><OrderCell><DocIcon sell={type === "sell"} />{id}</OrderCell></Td>
                      {[D + t1, type, "0.25", "gbpjpy", p1, sl, tp, D + t2, p2, "0.00"].map((v, k) => <Td key={k}>{v}</Td>)}
                      <Td $last>{profit}</Td>
                    </Tr>
                  ))}
                </tbody>
                <tfoot>
                  <tr>
                    <TotalTd colSpan={11}>
                      <TotalText>
                        <Svg w={8}><circle cx="4" cy="4" r="3" fill="#ddd" stroke="#888" /><path d="M2.500 5.500l3-3" stroke="#888" /></Svg>
                        <Pre>{"Profit/Loss: 417.63  Credit: 0.00  Deposit: 0.00  Withdrawal: 0.00"}</Pre>
                      </TotalText>
                    </TotalTd>
                    <TotalTd $right>417.63</TotalTd>
                  </tr>
                </tfoot>
              </Table>
            </TableBox>
            <TableScroll>
              <Scroll>
                <ScrollButton aria-label="Scroll up"><Chevron up /></ScrollButton>
                <Space />
                <Thumb $h={25} />
                <ScrollButton aria-label="Scroll down"><Chevron /></ScrollButton>
              </Scroll>
            </TableScroll>
          </TableArea>
          <TabStrip $h={24}>
            {terminalTabs.map(([t, w, o = {}]) => (
              <Tab key={t} $w={w} $on={o.on} $plain={o.plain}>{t}{o.n && <Unread>{o.n}</Unread>}</Tab>
            ))}
          </TabStrip>
        </TerminalMain>
      </Terminal>

      <StatusBar>
        <StatusCell>For Help, press F1</StatusCell>
        {[116, 102, 71, 71, 68, 70, 67].map((w, i) => <StatusCell key={i} $w={w} />)}
        <StatusCell $w={148}>
          <Svg w={24} h={13}>
            {Array.from({ length: 8 }, (_, i) => (
              <g key={i}>
                <path d={`M${i * 3 + 1} 0v${9 - i}`} stroke="#5a6400" strokeWidth="2" />
                <path d={`M${i * 3 + 1} ${10 - i}V13`} stroke="#1d3f5e" strokeWidth="2" />
              </g>
            ))}
          </Svg>
          287/1 kb
        </StatusCell>
      </StatusBar>

      <Taskbar>
        <TaskButton aria-label="HP">
          <Svg w={32}>
            <circle cx="16" cy="16" r="16" fill="#fff" />
            <path d="M13.500 2L7.500 22M10 13c4-2 6-1 5 2.500L13 22M21 11l-6 20M19 12h4c3 0 3 2 2.300 4.500C24.500 20 23.500 21.500 20.500 21.500h-3" stroke="#5fb3b5" strokeWidth="2.800" />
          </Svg>
        </TaskButton>
        <TaskButton aria-label="Chrome">
          <Svg w={32}>
            <path d="M16 16L2.140 8A16 16 0 0129.860 8z" fill="#e33b2e" />
            <path d="M16 16L29.860 8A16 16 0 0116 32z" fill="#fcc934" />
            <path d="M16 16v16A16 16 0 012.140 8z" fill="#2a9d4b" />
            <path d="M16 8.500h13.900L22.500 20 16 32l6-12z" fill="#fcc934" />
            <path d="M16 8.500h14L28 6H10z" fill="#e33b2e" />
            <path d="M2.140 8L9.500 20l6.500 3.500L22.500 20 16 32C9 32 0 26 0 16c0-3 1-6 2.140-8z" fill="#2a9d4b" />
            <circle cx="16" cy="16" r="8" fill="#fff" />
            <circle cx="16" cy="16" r="6.300" fill="#2f73e6" />
          </Svg>
        </TaskButton>
        <TaskButton aria-label="Internet Explorer">
          <Svg w={32}>
            <path d="M25.500 22A10 10 0 1126.500 17H10.500" stroke="#1b7fc4" strokeWidth="6" />
            <path d="M25.500 21.500A10 10 0 1126.500 17H10.500" stroke="#5cc4f4" strokeWidth="4.500" />
            <path d="M6 29c-8 3-4-9 4-17S29-1 29 3.500c0 1.500-.5 3-1.500 5" stroke="#f2bd27" strokeWidth="2.600" />
          </Svg>
        </TaskButton>
        <TaskButton $state="open" aria-label="File Explorer">
          <Svg w={34} h={32}>
            <path d="M2 5h10l2 3h18v18H2z" fill="#ecd07c" />
            <path d="M4 3h6v5H4zM12 4h8v5h-8zM21 6h8v5h-8z" fill="#fff" />
            <path d="M5 4h3v2H5z" fill="#2eb04c" /><path d="M14 5h3v2h-3z" fill="#d84a32" /><path d="M23 7h3v2h-3z" fill="#3f8ede" />
            <path d="M1 9h11l2 2h18v16H1z" fill="#f8e7a4" stroke="#d9b85b" />
            <path d="M6 31v-9q0-3 3-3h16q3 0 3 3v9h-5v-6H11v6z" fill="#8ecbee" stroke="#4a98c9" />
          </Svg>
        </TaskButton>
        <TaskButton $state="open" aria-label="Opera">
          <Svg w={30}>
            <path fillRule="evenodd" d="M15 0a15 15 0 100 30 15 15 0 000-30zm0 4c4 0 6 5 6 11s-2 11-6 11-6-5-6-11 2-11 6-11z" fill="#e3121f" />
            <path d="M19 1c7 2 11 8 11 14s-4 12-11 14c-2 .6-3-.5-1.500-2.500C20 24 21 20 21 15s-1-9-3.500-11.500C16 1.500 17 .5 19 1z" fill="#b3091a" />
          </Svg>
        </TaskButton>
        <TaskButton $state="active" aria-label="OctaFX MetaTrader">
          <Svg w={32}>
            <circle cx="16" cy="16" r="16" fill="#070b30" />
            <path d="M7 8c-1 7 1 11 6 16M26 6C20 10 12 15 8 25M13 15c4 1 6 5 12 7" stroke="#4a86e8" strokeWidth="3" />
            <path d="M24 8l-10 9" stroke="#a5d0ff" strokeWidth="2" />
          </Svg>
        </TaskButton>
        <Tray>
          <Svg w={8} h={5}><path d="M0 4.500l4-4 4 4z" fill="#fff" /></Svg>
          <Svg w={14}>
            <path d="M1 5h3l4-4v12L4 9H1z" fill="#fff" stroke="#1d4a4d" strokeWidth=".6" />
            <path d="M10 4.500c1.500 1.500 1.500 3.500 0 5M12 2.500c2.500 3 2.500 6 0 9" stroke="#fff" />
          </Svg>
          <Svg w={17} h={13}>
            {[0, 1, 2, 3, 4].map((i) => <rect key={i} x={i * 3 + 0.5} y={9 - i * 2} width="3" height={4 + i * 2 - 0.5} fill="#fff" stroke="#1d4a4d" />)}
          </Svg>
          <Svg w={15} h={16}>
            <path d="M1 4v3h4V4M3 7v8M2 1v3M4 1v3" stroke="#a5d5d5" />
            <rect x="7" y="2.500" width="7" height="13" rx="1" stroke="#fff" strokeWidth="1.500" fill="#17494c" />
            <path d="M9 1h3" stroke="#fff" strokeWidth="2" /><path d="M9 9h3v4.500H9z" fill="#fff" />
          </Svg>
          <Lang>ENG</Lang>
          <Clock>10:55 AM<br />08/12/2024</Clock>
        </Tray>
      </Taskbar>
    </App_>
  );
}

const Col = styled.col`
  width: ${(p) => (p.$w ? `${p.$w}px` : "auto")};
`;
const Pre = styled.span`
  white-space: pre;
`;
const Lang = styled.span`
  margin-left: 3px;
`;
const SortHead = styled.span`
  display: flex;
  align-items: center;
  gap: 11px;
`;
const Letter = styled(ToolButton)`
  font-size: 13px;
  font-weight: 600;
  color: #555;
`;
